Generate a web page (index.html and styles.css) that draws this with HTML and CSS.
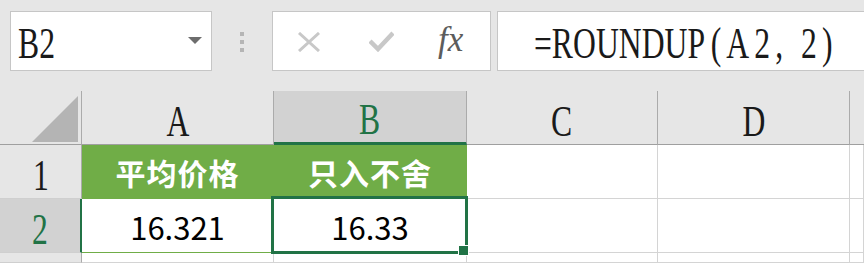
FILE: index.html
```html
<!DOCTYPE html>
<html lang="zh-CN">
<head>
  <meta charset="UTF-8"/>
  <meta name="viewport" content="width=device-width,initial-scale=1.0"/>
  <title>ROUNDUP</title>
  <link rel="stylesheet" href="styles.css">
</head>
<body>
  <div class="formula-bar">
    <div class="name-box">
      <span class="serif left">B2</span>
      <span class="caret"></span>
    </div>
    <div class="grip"><i></i><i></i><i></i></div>
    <div class="fx-box">
      <svg class="icon-x" width="24" height="20" viewBox="0 0 24 20">
        <path d="M2 1 L22 19 M22 1 L2 19" stroke="#c8c8c8" stroke-width="3" fill="none"/>
      </svg>
      <svg class="icon-check" width="25" height="21" viewBox="0 0 25 21">
        <path d="M1 10 L9 18 L24 2" stroke="#c8c8c8" stroke-width="4.5" fill="none"/>
      </svg>
      <span class="fx">fx</span>
    </div>
    <div class="formula">
      <span class="serif left">=ROUNDUP<span class="paren">(A2, 2)</span></span>
    </div>
  </div>

  <div class="sheet">
    <!-- cabecera de columnas -->
    <div class="hd corner"><span class="tri"></span></div>
    <div class="hd col"><span class="serif">A</span></div>
    <div class="hd col active"><span class="serif">B</span></div>
    <div class="hd col"><span class="serif">C</span></div>
    <div class="hd col"><span class="serif">D</span></div>
    <div class="hd col last"></div>

    <!-- fila 1 -->
    <div class="hd row"><span class="serif">1</span></div>
    <div class="cell title">平均价格</div>
    <div class="cell title">只入不舍</div>
    <div class="cell"></div>
    <div class="cell"></div>
    <div class="cell"></div>

    <!-- fila 2 -->
    <div class="hd row active"><span class="serif">2</span></div>
    <div class="cell num under">16.321</div>
    <div class="cell num selected">16.33<span class="sel"></span><span class="handle"></span></div>
    <div class="cell"></div>
    <div class="cell"></div>
    <div class="cell"></div>

    <!-- fila 3 -->
    <div class="hd row"></div>
    <div class="cell"></div>
    <div class="cell"></div>
    <div class="cell"></div>
    <div class="cell"></div>
    <div class="cell"></div>
  </div>
</body>
</html>
```

FILE: styles.css
```css
html, body { margin:0; padding:0; }
body { background:#e6e6e6; width:864px; height:263px; overflow:hidden; font-family:"Noto Sans CJK SC", "Liberation Sans", sans-serif; }

.serif { font-family:"Liberation Serif", serif; font-size:44px; line-height:48px; display:inline-block; transform:scaleX(0.72); color:#1a1a1a; white-space:nowrap; }
.serif.left { transform-origin:left center; }

/* barra de fórmulas */
.formula-bar { display:flex; padding:11px 0 0 10px; height:60px; }
.name-box, .fx-box, .formula { background:#fff; border:1px solid #c6c6c6; box-sizing:border-box; height:60px; display:flex; align-items:center; flex-shrink:0; }
.name-box { width:202px; padding:5px 9px 0 7px; justify-content:space-between; }
.name-box .caret { width:0; height:0; border-left:7px solid transparent; border-right:7px solid transparent; border-top:7px solid #6d6d6d; margin-top:-6px; }
.grip { width:60px; flex-shrink:0; display:flex; flex-direction:column; align-items:center; justify-content:center; gap:4px; margin-top:2px; }
.grip i { width:4px; height:4px; background:#b5b5b5; display:block; }
.fx-box { width:219px; padding-left:24px; }
.icon-x { margin-top:2px; flex-shrink:0; }
.icon-check { margin-left:48px; flex-shrink:0; }
.fx { font-family:"Liberation Serif", serif; font-style:italic; font-size:35px; color:#5c5c5c; margin-left:44px; margin-top:-2px; }
.formula { flex:1 1 auto; min-width:0; overflow:hidden; margin-left:6px; border-right:none; padding:6px 0 0 36px; }
.formula .paren { letter-spacing:7px; margin-left:8px; }

/* hoja */
.sheet { display:grid; grid-template-columns:82px 192px 193px 191px 192px 1fr; grid-template-rows:54px 54px 54px 1fr; margin-top:20px; height:172px; }
.hd { background:#e6e6e6; box-sizing:border-box; display:flex; align-items:center; justify-content:center; padding-top:8px; }
.hd.col, .hd.corner { border-right:1px solid #ababab; border-bottom:1px solid #9f9f9f; }
.hd.col.active { background:#d2d2d2; border-bottom:3px solid #217346; padding-top:6px; }
.hd.col.active .serif { color:#217346; }
.hd.col.last { border-right:none; }
.hd.corner { position:relative; }
.tri { position:absolute; right:3px; bottom:2px; width:0; height:0; border-left:46px solid transparent; border-bottom:46px solid #b4b4b4; }
.hd.row { border-right:1px solid #ababab; border-bottom:1px solid #cfcfcf; }
.hd.row.active { background:#d2d2d2; border-right:2px solid #217346; }
.hd.row.active .serif { color:#217346; }

.cell { background:#fff; box-sizing:border-box; border-right:1px solid #d4d4d4; border-bottom:1px solid #d4d4d4; display:flex; align-items:center; justify-content:center; }
.cell.title { background:#70ad47; border-color:#70ad47; color:#fff; font-weight:bold; font-size:30px; letter-spacing:1px; }
.cell.num { font-size:31px; color:#000; padding-top:2px; }
.cell.under { border-bottom-color:#70ad47; }
.cell.selected { position:relative; }
.sel { position:absolute; top:-3px; left:-3px; right:-2px; bottom:-2px; border:3px solid #217346; }
.handle { position:absolute; right:-3px; bottom:-4px; width:11px; height:11px; box-sizing:border-box; background:#217346; border:1px solid #fff; }
```
